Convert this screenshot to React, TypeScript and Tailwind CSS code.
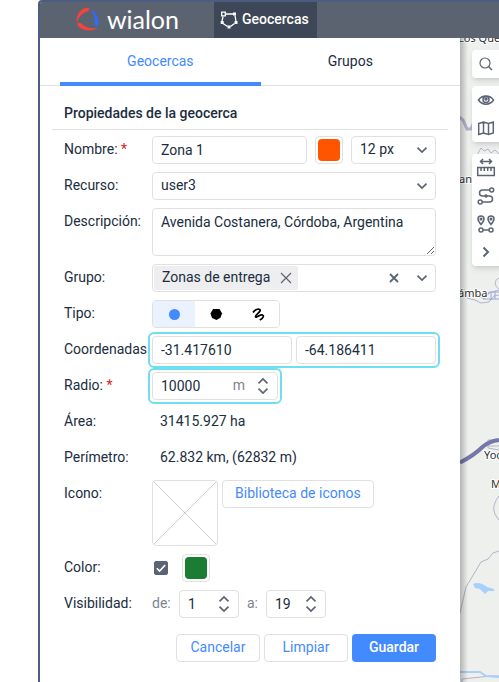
import React, { useState } from 'react';

const FIELD = 'h-7 min-w-0 rounded border border-[#e0e0e0] bg-white text-[#202d40]';
const INPUT = FIELD + ' px-2 outline-none';
const BUTTON = 'h-7 rounded border border-[#e0e0e0] bg-white pb-0.5 text-[#448aff]';
const HIGHLIGHT = 'rounded-xs outline-2 outline-offset-2 outline-[#6fdff0]';

function clsName(...names: (string | undefined)[]) {
  return names.filter(Boolean).join(' ');
}

const Chevron: React.FC<{ className?: string }> = ({ className }) => (
  <svg viewBox="0 0 12 8" className={clsName('h-2 w-3', className)} fill="none" stroke="#5c6474" strokeWidth="1.700">
    <path d="M1.500 1.700 6 6l4.500-4.300" />
  </svg>
);

interface RowProps {
  label: string;
  id?: string;
  required?: boolean;
  children: React.ReactNode;
}

const Row: React.FC<RowProps> = ({ label, id, required, children }) => (
  <div className="flex items-start">
    <label htmlFor={id} className="w-22 shrink-0 text-[#202d40] leading-[26px] whitespace-nowrap">
      {label}{required && <span className="text-[#e02020]"> *</span>}
    </label>
    <div className="flex min-w-0 flex-1 items-center">{children}</div>
  </div>
);

interface SelectProps {
  id?: string;
  label?: string;
  options: string[];
  className?: string;
}

const Select: React.FC<SelectProps> = ({ id, label, options, className }) => (
  <div className={clsName('relative', className)}>
    <select id={id} aria-label={label} className={FIELD + ' block w-full appearance-none pl-2 pb-0.5 pr-7 outline-none'}>
      {options.map(o => <option key={o}>{o}</option>)}
    </select>
    <Chevron className="pointer-events-none absolute right-2 top-2.5" />
  </div>
);

interface StepperProps {
  id?: string;
  label?: string;
  initial: number;
  unit?: string;
  className?: string;
}

const Stepper: React.FC<StepperProps> = ({ id, label, initial, unit, className }) => {
  const [value, setValue] = useState(String(initial));
  const step = (d: number) => setValue(v => String(Number(v) + d));

  return (
    <div className={clsName(FIELD, 'flex items-center pl-2 pr-2', className)}>
      <input id={id} aria-label={label} value={value} onChange={e => setValue(e.target.value)} className="w-0 min-w-0 flex-1 outline-none" />
      {unit && <span className="mr-3 pb-0.5 text-[#7e858f]">{unit}</span>}
      <span className="flex flex-col gap-0.5">
        <button type="button" aria-label="Aumentar" onClick={() => step(1)}><Chevron className="block rotate-180" /></button>
        <button type="button" aria-label="Reducir" onClick={() => step(-1)}><Chevron className="block" /></button>
      </span>
    </div>
  );
};

const Swatch: React.FC<{ label: string; className: string }> = ({ label, className }) => (
  <button type="button" aria-label={label} className="h-7 w-7 shrink-0 rounded border border-[#e0e0e0] bg-white p-0.5">
    <span className={clsName('block h-full w-full rounded', className)} />
  </button>
);

const Logo: React.FC = () => (
  <a href="#" aria-label="wialon" className="ml-9 flex w-[103px] items-center gap-2 pb-0.5 text-white">
    <svg viewBox="0 0 24 24" className="h-6 w-6">
      <path d="M1 17C-.6 8.500 4.500 1 11.500.2c1.700-.1 2.500.6 2.400 1.900-.1 1.300-1.200 1.700-2.700 2.200C5.800 6 2 10.500 1 17Z" fill="#f9423a" />
      <path d="M14.800 1.200c5.400 2.200 9.200 8.800 8.600 16-.2 1.700-1 2.500-2.200 2.400-1.400-.1-1.900-1.200-1.700-2.800.6-6.300-.9-11.800-4.700-15.600Z" fill="#2f6bff" />
      <path d="M22.500 21.300C18 24.800 8.500 24.900 3.200 20.300c-1.500-1.300-2.200-2.700-1.200-3.800 1-1.100 2.500-.6 3.800.5 4.300 3.900 9.700 5.600 16.700 4.300Z" fill="#f9423a" />
    </svg>
    <span className="font-['Lato',sans-serif] text-[25px] leading-8">wialon</span>
  </a>
);

const GeofenceIcon: React.FC = () => (
  <svg viewBox="0 0 18 18" className="h-4.5 w-4.5" fill="none" stroke="#fff" strokeWidth="1.300">
    <path d="M5.500 3h8M15 4.500l1 6M14.500 12.500 10.500 15.500M7.500 15.500 3 12.500M2 10.500l1-5" />
    <path d="M1.700 1.200h3.600v3.600H1.700z" />
    <g fill="#fff" stroke="none">
      <path d="M13 1.500h3v3h-3zM.7 10h3v3h-3zM14.500 10h3v3h-3zM7.500 14.500h3v3h-3z" />
    </g>
  </svg>
);

const TOOLS: { name: string; icon: React.ReactNode }[][] = [
  [{ name: 'Buscar', icon: <><circle cx="9" cy="9" r="5" strokeWidth="1.200" /><path d="m12.700 12.700 3.300 3.300" /></> }],
  [
    { name: 'Capas visibles', icon: <><path d="M2.500 10C6 4.500 14 4.500 17.500 10 14 15.500 6 15.500 2.500 10Z" /><circle cx="10" cy="9.500" r="3" /><circle cx="10" cy="9" r="1" fill="#5c6474" /></> },
    { name: 'Mapa', icon: <path d="M2.700 5.500 7.500 4l5 1.500L17.300 4v11l-4.800 1.500-5-1.500-4.800 1.500zM7.500 4v11M12.500 5.500v11" /> },
  ],
  [
    { name: 'Distancia', icon: <><path d="M4.500 3.500h11M7 1 4.500 3.500 7 6M13 1l2.500 2.500L13 6M1.700 9.500h16.600v8H1.700zM5 10v3M8.300 10v3M11.700 10v3M15 10v3" /></> },
    { name: 'Ruta', icon: <><path d="M13.500 4H6.500a3 3 0 0 0 0 6h7a3 3 0 0 1 0 6H6" /><circle cx="15.700" cy="4" r="2" /><circle cx="4.200" cy="16" r="2" /><circle cx="10" cy="10" r="1" /></> },
    { name: 'Direcciones', icon: <><path d="M5 10.500C2.500 7.500 2 6.500 2 5a3 3 0 0 1 6 0c0 1.500-.5 2.500-3 5.500ZM15 10.500C12.500 7.500 12 6.500 12 5a3 3 0 0 1 6 0c0 1.500-.5 2.500-3 5.500Z" /><circle cx="5" cy="5" r=".8" /><circle cx="15" cy="5" r=".8" /><circle cx="5" cy="16" r="2" /><circle cx="15" cy="16" r="2" /><path d="M7 16h6" /></> },
    { name: 'Más', icon: <path d="m7.500 5.500 4.500 4.500-4.500 4.500" strokeWidth="2" /> },
  ],
];
const TOOL_GAPS = ['', 'mt-2', 'mt-3'];

const MapView: React.FC = () => (
  <div className="relative min-w-0 flex-1 overflow-hidden bg-[#edf0ed]">
    <svg width="39" height="644" viewBox="0 38 39 644" overflow="visible" fill="none" className="block">
      <g stroke="#b3b3cb">
        <path d="M-2 116l5 4 4 9h4l3-7 6-2" strokeWidth="3" />
        <path d="M17 155l4-7 3 3 4-2 3 4 4-3 4 4" />
        <path d="M0 292l7 6 8 2 6 3 8-1 5-6 5-1M3 289l7 5 8 1 6 4 5-6 10-3M39 278c-5 2-5 8 0 11" />
        <path d="M28 446h11M28 440v8l11 2M28 440h11M39 496c-7 9-7 16 0 24" />
        <path d="M0 613l6-26 15-25 7-3 5-6 6-2" />
        <path d="M2 682v-3l29-3h8" />
      </g>
      <path d="M23 296h4l2-4h10M23 299h16M31 292v8M35 291v8" stroke="#9da6d8" />
      <path d="M0 462.500c12-6 18-11 23-16 6-5 10-6 16-6.500" stroke="#7478a8" strokeWidth="4" />
      <path d="M13 584c4-2 9-1 14 3l7 2v2h-6l-3 3-5-5-5-1z" fill="#a8d0fb" />
      <path d="M0 672h20l6 4 13 1" stroke="#a8d0fb" strokeWidth="2" />
      <g fill="#2f2f2f" stroke="#fff" strokeWidth="2" paintOrder="stroke" className="font-['Noto_Sans',sans-serif] text-[11px]">
        <text x="-2" y="42">Los Que</text>
        <text x="-1" y="183">an</text>
        <text x="-2" y="297">ámba</text>
        <text x="24" y="459">Yoc</text>
        <text x="31" y="488">M</text>
      </g>
    </svg>
    <div className="absolute inset-y-0 left-0 w-2 bg-linear-to-r from-black/25 to-transparent" />
    <div className="absolute left-3 top-3 flex flex-col">
      {TOOLS.map((group, i) => (
        <div key={i} className={clsName('flex w-10 flex-col rounded bg-white shadow-md', TOOL_GAPS[i])}>
          {group.map(t => (
            <button key={t.name} type="button" aria-label={t.name} className="flex h-7 w-7 items-center justify-center">
              <svg viewBox="0 0 20 20" className="h-5 w-5" fill="none" stroke="#5c6474" strokeWidth="1.500">{t.icon}</svg>
            </button>
          ))}
        </div>
      ))}
    </div>
  </div>
);

const SHAPES = [
  { name: 'Círculo', icon: <circle cx="8.500" cy="8.500" r="5.500" fill="#448aff" /> },
  { name: 'Polígono', icon: <path d="M5 3h6.500L14 7.200 12.500 11.800 8.500 14 4 12 2.500 7.500z" fill="#000" /> },
  { name: 'Línea', icon: <path d="M3 6.500C5 3.500 8 2.300 9.700 3.500c2.300 1.800-4.700 5-4.200 7.300.5 1.700 4.500-2.600 7-1.800 2 .8.200 3.700-2.800 5" fill="none" stroke="#000" strokeWidth="1.700" /> },
];

const GeofenceForm: React.FC = () => {
  const [shape, setShape] = useState('Círculo');
  const [colored, setColored] = useState(true);

  return (
    <form onSubmit={e => e.preventDefault()} className="px-3 pt-3">
      <h2 className="border-b border-[#e0e0e0] px-3 py-[3px] font-medium leading-[25px] text-[#202d40]">Propiedades de la geocerca</h2>
      <div className="mt-1.5 flex flex-col gap-2 px-3">
        <Row label="Nombre:" id="name" required>
          <input id="name" defaultValue="Zona 1" className={INPUT + ' mr-2 flex-1'} />
          <Swatch label="Color del nombre" className="bg-[#ff5500]" />
          <Select label="Tamaño" options={['12 px', '14 px', '16 px']} className="ml-2 w-[85px]" />
        </Row>
        <Row label="Recurso:" id="resource">
          <Select id="resource" options={['user3']} className="flex-1" />
        </Row>
        <Row label="Descripción:" id="description">
          <textarea id="description" defaultValue="Avenida Costanera, Córdoba, Argentina" className="block h-12 w-full min-w-0 resize rounded border border-[#e0e0e0] px-2 py-[3px] leading-5 text-[#202d40] outline-none" />
        </Row>
        <Row label="Grupo:">
          <div className={FIELD + ' flex flex-1 items-center justify-between pl-px pr-[7px]'}>
            <span className="flex h-6 items-center gap-2.5 rounded-xs bg-[#eeeef0] pl-2 pr-1.5">
              <span className="pb-0.5">Zonas de entrega</span>
              <button type="button" aria-label="Quitar Zonas de entrega">
                <svg viewBox="0 0 12 12" className="h-3 w-3" stroke="#5c6474" strokeWidth="1.200"><path d="m1 1 10 10M11 1 1 11" /></svg>
              </button>
            </span>
            <span className="flex items-center gap-4">
              <button type="button" aria-label="Borrar todo">
                <svg viewBox="0 0 12 12" className="h-3 w-3" stroke="#5c6474" strokeWidth="1.800"><path d="m2 2 8 8M10 2l-8 8" /></svg>
              </button>
              <button type="button" aria-label="Abrir grupos"><Chevron className="block" /></button>
            </span>
          </div>
        </Row>
        <Row label="Tipo:">
          <div className={FIELD + ' flex overflow-hidden'}>
            {SHAPES.map(s => (
              <button
                key={s.name}
                type="button"
                aria-label={s.name}
                aria-pressed={shape === s.name}
                onClick={() => setShape(s.name)}
                className={clsName('flex w-[42px] items-center justify-center', shape === s.name ? 'bg-[#eaf1ff]' : 'bg-white')}
              >
                <svg viewBox="0 0 16 16" className="h-4 w-4">{s.icon}</svg>
              </button>
            ))}
          </div>
        </Row>
        <Row label="Coordenadas" id="lat">
          <div className={HIGHLIGHT + ' flex flex-1 gap-1'}>
            <input id="lat" defaultValue="-31.417610" className={INPUT + ' w-0 flex-1'} />
            <input aria-label="Longitud" defaultValue="-64.186411" className={INPUT + ' w-0 flex-1'} />
          </div>
        </Row>
        <Row label="Radio:" id="radius" required>
          <div className={HIGHLIGHT}>
            <Stepper id="radius" initial={10000} unit="m" className="w-[126px]" />
          </div>
        </Row>
        <Row label="Área:"><output className="mb-0.5 px-2 leading-[26px] text-[#202d40]">31415.927 ha</output></Row>
        <Row label="Perímetro:"><output className="mb-0.5 px-2 leading-[26px] text-[#202d40]">62.832 km, (62832 m)</output></Row>
        <Row label="Icono:">
          <div className="flex items-start gap-1">
            <div className="h-[66px] w-[66px] rounded border border-[#e0e0e0]">
              <svg viewBox="0 0 64 64" className="block h-full w-full" stroke="#cfcfcf"><path d="m1 1 62 62M63 1 1 63" /></svg>
            </div>
            <button type="button" className={BUTTON + ' px-3'}>Biblioteca de iconos</button>
          </div>
        </Row>
        <Row label="Color:" id="color">
          <span className="relative ml-0.5 mr-3.5 block h-3.5 w-3.5">
            <input id="color" type="checkbox" checked={colored} onChange={e => setColored(e.target.checked)} className="block h-3.5 w-3.5 appearance-none rounded-xs border border-[#5c6474] checked:bg-[#5c6474]" />
            {colored && <svg viewBox="0 0 14 14" className="pointer-events-none absolute inset-0" fill="none" stroke="#fff" strokeWidth="1.600"><path d="m2.800 7.200 2.800 2.800 5.600-6" /></svg>}
          </span>
          <Swatch label="Color de la geocerca" className="bg-[#1b7d31]" />
        </Row>
        <Row label="Visibilidad:">
          <span className="w-[27px] pb-0.5 text-[#7e858f]">de:</span>
          <Stepper label="Visible de" initial={1} className="w-15" />
          <span className="ml-2 w-[19px] pb-0.5 text-[#7e858f]">a:</span>
          <Stepper label="Visible a" initial={19} className="w-15" />
        </Row>
      </div>
      <div className="mt-4 flex justify-end gap-1 px-3 pb-5">
        <button type="button" className={BUTTON + ' w-21'}>Cancelar</button>
        <button type="reset" className={BUTTON + ' w-21'}>Limpiar</button>
        <button type="submit" className="h-7 w-21 rounded bg-[#448aff] pb-0.5 font-medium text-white">Guardar</button>
      </div>
    </form>
  );
};

export default function App() {
  return (
    <div className="min-h-screen bg-white pl-[38px] font-['Roboto',sans-serif] text-[14px] leading-5">
      <div className="flex min-h-screen flex-col overflow-hidden rounded-tl border-l-2 border-t-2 border-[#4c5d80]">
        <header className="flex h-9 bg-[#5c6370]">
          <Logo />
          <a href="#geocercas" className="ml-[35px] flex items-center gap-1 bg-[#3e4757] pl-1.5 pr-2 font-medium text-white">
            <GeofenceIcon />
            <span className="pb-0.5">Geocercas</span>
          </a>
        </header>
        <div className="flex flex-1">
          <section className="w-[420px] shrink-0 bg-white">
            <nav className="flex h-12 border-b border-[#e0e0e0] px-5">
              <button type="button" className="h-12 flex-auto border-b-4 border-[#448aff] pt-0.5 text-[#448aff]">Geocercas</button>
              <button type="button" className="h-12 flex-auto pb-0.5 text-[#202d40]">Grupos</button>
            </nav>
            <GeofenceForm />
          </section>
          <MapView />
        </div>
      </div>
    </div>
  );
}
